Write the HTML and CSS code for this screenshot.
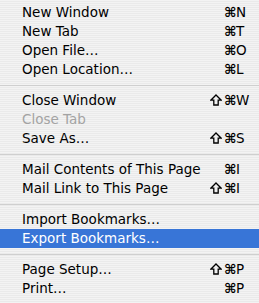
FILE: index.html
```html
<!DOCTYPE html>
<html>
<head>
<meta charset="utf-8">
<link rel="stylesheet" href="styles.css">
</head>
<body>
<div class="menu">
  <div class="item"><span class="label">New Window</span><span class="keys"><span class="shift"></span><span class="cmd">⌘</span><span class="key">N</span></span></div>
  <div class="item"><span class="label">New Tab</span><span class="keys"><span class="shift"></span><span class="cmd">⌘</span><span class="key">T</span></span></div>
  <div class="item"><span class="label">Open File…</span><span class="keys"><span class="shift"></span><span class="cmd">⌘</span><span class="key">O</span></span></div>
  <div class="item"><span class="label">Open Location…</span><span class="keys"><span class="shift"></span><span class="cmd">⌘</span><span class="key">L</span></span></div>
  <div class="sep"></div>
  <div class="item"><span class="label">Close Window</span><span class="keys"><span class="shift"><svg class="shift-icon" viewBox="0 0 12 12"><path d="M6 1 L11.2 6.2 H8.2 V11 H3.8 V6.2 H0.8 Z"/></svg></span><span class="cmd">⌘</span><span class="key">W</span></span></div>
  <div class="item disabled"><span class="label">Close Tab</span></div>
  <div class="item"><span class="label">Save As…</span><span class="keys"><span class="shift"><svg class="shift-icon" viewBox="0 0 12 12"><path d="M6 1 L11.2 6.2 H8.2 V11 H3.8 V6.2 H0.8 Z"/></svg></span><span class="cmd">⌘</span><span class="key">S</span></span></div>
  <div class="sep"></div>
  <div class="item"><span class="label">Mail Contents of This Page</span><span class="keys"><span class="shift"></span><span class="cmd">⌘</span><span class="key">I</span></span></div>
  <div class="item"><span class="label">Mail Link to This Page</span><span class="keys"><span class="shift"><svg class="shift-icon" viewBox="0 0 12 12"><path d="M6 1 L11.2 6.2 H8.2 V11 H3.8 V6.2 H0.8 Z"/></svg></span><span class="cmd">⌘</span><span class="key">I</span></span></div>
  <div class="sep"></div>
  <div class="item"><span class="label">Import Bookmarks…</span></div>
  <div class="item selected"><span class="label">Export Bookmarks…</span></div>
  <div class="sep"></div>
  <div class="item"><span class="label">Page Setup…</span><span class="keys"><span class="shift"><svg class="shift-icon" viewBox="0 0 12 12"><path d="M6 1 L11.2 6.2 H8.2 V11 H3.8 V6.2 H0.8 Z"/></svg></span><span class="cmd">⌘</span><span class="key">P</span></span></div>
  <div class="item"><span class="label">Print…</span><span class="keys"><span class="shift"></span><span class="cmd">⌘</span><span class="key">P</span></span></div>
</div>
</body>
</html>
```
FILE: styles.css
```css
html, body {
  margin: 0;
  padding: 0;
}
body {
  width: 259px;
  height: 303px;
  overflow: hidden;
  background: repeating-linear-gradient(to bottom, #f3f3f3 0px, #f3f3f3 1px, #eaeaea 1px, #eaeaea 2px);
  font-family: "DejaVu Sans", "Lucida Grande", sans-serif;
  font-size: 13.5px;
  color: #000;
}
.menu {
  display: flex;
  flex-direction: column;
  padding-top: 3px;
}
.item {
  display: flex;
  align-items: center;
  height: 19px;
  line-height: 19px;
  padding-left: 22px;
  white-space: nowrap;
}
.label {
  flex: 1;
}
.keys {
  display: flex;
  width: 49px;
}
.shift {
  width: 14px;
  display: flex;
  align-items: center;
}
.shift-icon {
  width: 12px;
  height: 12px;
  margin-top: -2px;
  fill: none;
  stroke: #000;
  stroke-width: 1.3;
  stroke-linejoin: miter;
}
.cmd {
  width: 12px;
  font-weight: bold;
}
.key {
  flex: 1;
}
.disabled {
  color: #a3a3a3;
}
.selected {
  background: #3875d7;
  color: #fff;
}
.sep {
  height: 12px;
  display: flex;
  align-items: center;
}
.sep::before {
  content: "";
  display: block;
  width: 100%;
  height: 1px;
  background: #cfcfcf;
}
```
